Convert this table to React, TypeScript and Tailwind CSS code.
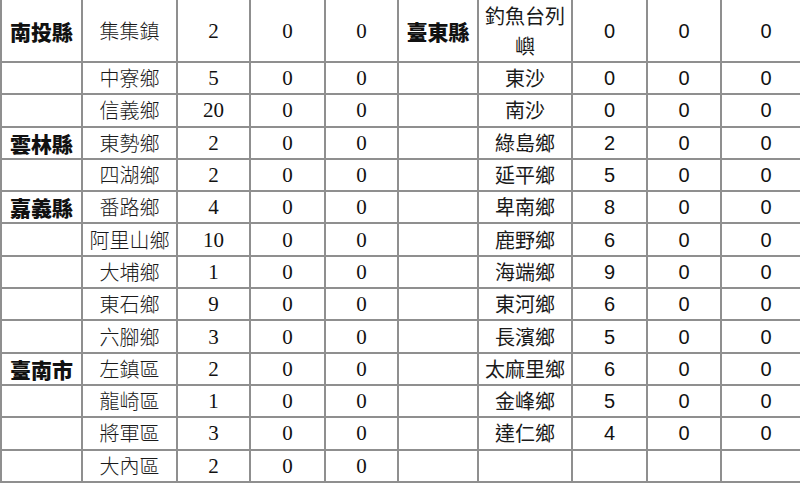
type Row = { county: string; town: string; a: string; b: string; c: string };

const leftRows: Row[] = [
  { county: "南投縣", town: "集集鎮", a: "2", b: "0", c: "0" },
  { county: "", town: "中寮鄉", a: "5", b: "0", c: "0" },
  { county: "", town: "信義鄉", a: "20", b: "0", c: "0" },
  { county: "雲林縣", town: "東勢鄉", a: "2", b: "0", c: "0" },
  { county: "", town: "四湖鄉", a: "2", b: "0", c: "0" },
  { county: "嘉義縣", town: "番路鄉", a: "4", b: "0", c: "0" },
  { county: "", town: "阿里山鄉", a: "10", b: "0", c: "0" },
  { county: "", town: "大埔鄉", a: "1", b: "0", c: "0" },
  { county: "", town: "東石鄉", a: "9", b: "0", c: "0" },
  { county: "", town: "六腳鄉", a: "3", b: "0", c: "0" },
  { county: "臺南市", town: "左鎮區", a: "2", b: "0", c: "0" },
  { county: "", town: "龍崎區", a: "1", b: "0", c: "0" },
  { county: "", town: "將軍區", a: "3", b: "0", c: "0" },
  { county: "", town: "大內區", a: "2", b: "0", c: "0" },
];

const rightRows: Row[] = [
  { county: "臺東縣", town: "釣魚台列嶼", a: "0", b: "0", c: "0" },
  { county: "", town: "東沙", a: "0", b: "0", c: "0" },
  { county: "", town: "南沙", a: "0", b: "0", c: "0" },
  { county: "", town: "綠島鄉", a: "2", b: "0", c: "0" },
  { county: "", town: "延平鄉", a: "5", b: "0", c: "0" },
  { county: "", town: "卑南鄉", a: "8", b: "0", c: "0" },
  { county: "", town: "鹿野鄉", a: "6", b: "0", c: "0" },
  { county: "", town: "海端鄉", a: "9", b: "0", c: "0" },
  { county: "", town: "東河鄉", a: "6", b: "0", c: "0" },
  { county: "", town: "長濱鄉", a: "5", b: "0", c: "0" },
  { county: "", town: "太麻里鄉", a: "6", b: "0", c: "0" },
  { county: "", town: "金峰鄉", a: "5", b: "0", c: "0" },
  { county: "", town: "達仁鄉", a: "4", b: "0", c: "0" },
  { county: "", town: "", a: "", b: "", c: "" },
];

const cell = "border-b-2 border-r-2 border-[#8f8f8f] text-center align-middle p-0 px-[2px] leading-[26px]";
const county = `${cell} font-['Noto_Sans_CJK_TC',sans-serif] font-black text-[21px] text-[#111]`;
const townLeft = `${cell} font-['Noto_Sans_CJK_TC',sans-serif] font-light text-[20px] text-[#1a1a1a]`;
const townRight = `${cell} font-['Noto_Sans_CJK_TC',sans-serif] text-[20px] !leading-[30px] text-[#1a1a1a]`;
const numLeft = `${cell} font-['Liberation_Serif',serif] text-[21px] text-[#111]`;
const numRight = `${cell} font-['Liberation_Sans',sans-serif] text-[20px] text-[#111]`;

export default function App() {
  return (
    <div className="w-[800px] h-[489px] overflow-hidden bg-white">
      <table className="table-fixed border-collapse w-[810px]">
        <colgroup>
          <col className="w-[81px]" />
          <col className="w-[95px]" />
          <col className="w-[73px]" />
          <col className="w-[75px]" />
          <col className="w-[73px]" />
          <col className="w-[80px]" />
          <col className="w-[94px]" />
          <col className="w-[75px]" />
          <col className="w-[74px]" />
          <col className="w-[90px]" />
        </colgroup>
        <tbody>
          {leftRows.map((l, i) => {
            const r = rightRows[i];
            return (
              <tr key={i} className={i === 0 ? "h-[62px]" : "h-[32.3px]"}>
                <td className={`${county} border-l-2`}>{l.county}</td>
                <td className={townLeft}>{l.town}</td>
                <td className={numLeft}>{l.a}</td>
                <td className={numLeft}>{l.b}</td>
                <td className={numLeft}>{l.c}</td>
                <td className={county}>{r.county}</td>
                <td className={townRight}>{r.town}</td>
                <td className={numRight}>{r.a}</td>
                <td className={numRight}>{r.b}</td>
                <td className={numRight}>{r.c}</td>
              </tr>
            );
          })}
        </tbody>
      </table>
    </div>
  );
}
